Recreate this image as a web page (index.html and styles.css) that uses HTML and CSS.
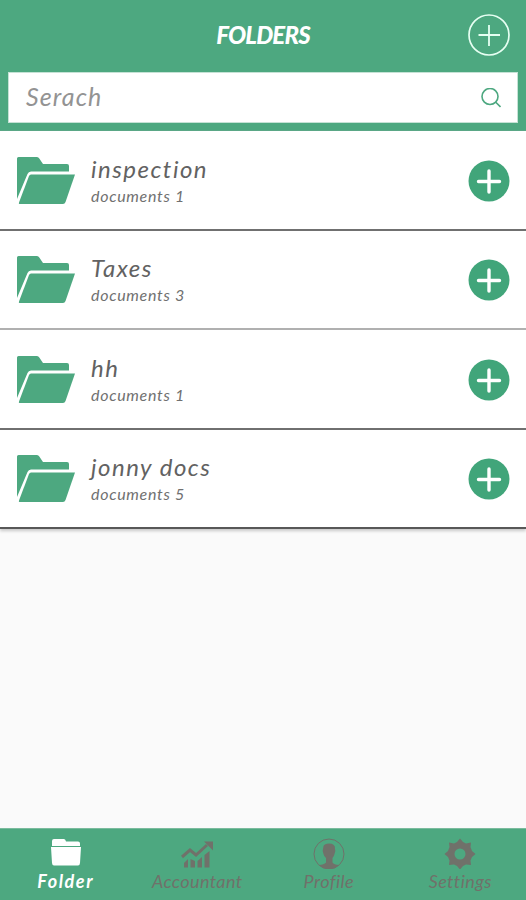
FILE: index.html
```html
<!DOCTYPE html>
<html lang="en">
<head>
  <meta charset="UTF-8" />
  <meta name="viewport" content="width=device-width, initial-scale=1.0"/>
  <title>Folders</title>
  <link rel="stylesheet" href="styles.css">
</head>
<body>

<!-- shared icons -->
<svg class="sprite">
  <symbol id="icon-folder" viewBox="0 0 60 50">
    <path d="M1 2.500Q1 1 2.500 1H21Q22.500 1 23.300 2.500L27 8H51Q53 8 53 10V15.500H15Q12.500 15.500 11.500 18L1 43Z"/>
    <path d="M15 18.500H59L49.500 46Q48.800 48 47 48H3.500Q2.500 48 3 46.500L13 20Q13.600 18.500 15 18.500Z"/>
  </symbol>
  <symbol id="icon-add" viewBox="0 0 42 42">
    <circle cx="21" cy="21" r="20.500"/>
    <path d="M21 11V32M10.500 21.500H31.500" fill="none" stroke="#fff" stroke-width="3.400" stroke-linecap="round"/>
  </symbol>
</svg>

<header>
  <div class="title-bar">
    <h1>FOLDERS</h1>
    <button class="new-btn" aria-label="New folder">
      <svg width="42" height="42" viewBox="0 0 42 42" fill="none" stroke="#e6fff2">
        <circle cx="21" cy="21" r="20" stroke-width="1.700"/>
        <path d="M21 11V32M10.500 21H32" stroke-width="1.800"/>
      </svg>
    </button>
  </div>
  <div class="search">
    <span>Serach</span>
    <svg width="20" height="20" viewBox="0 0 20 20" fill="none" stroke="#4da880" stroke-width="1.600">
      <circle cx="9" cy="8.500" r="8"/>
      <path d="M14.500 14L19.500 19"/>
    </svg>
  </div>
</header>

<main>
  <div class="row">
    <svg class="folder"><use href="#icon-folder"/></svg>
    <div class="info">
      <h2>inspection</h2>
      <p>documents 1</p>
    </div>
    <svg class="add"><use href="#icon-add"/></svg>
  </div>
  <div class="row light">
    <svg class="folder"><use href="#icon-folder"/></svg>
    <div class="info">
      <h2>Taxes</h2>
      <p>documents 3</p>
    </div>
    <svg class="add"><use href="#icon-add"/></svg>
  </div>
  <div class="row">
    <svg class="folder"><use href="#icon-folder"/></svg>
    <div class="info">
      <h2>hh</h2>
      <p>documents 1</p>
    </div>
    <svg class="add"><use href="#icon-add"/></svg>
  </div>
  <div class="row last">
    <svg class="folder"><use href="#icon-folder"/></svg>
    <div class="info">
      <h2>jonny docs</h2>
      <p>documents 5</p>
    </div>
    <svg class="add"><use href="#icon-add"/></svg>
  </div>
</main>

<nav>
  <a class="tab active">
    <svg width="32" height="32" viewBox="0 0 32 32">
      <path d="M2 8V4Q2 2 4 2H14Q15.500 2 16 4.500H28Q30 4.500 30 6.500V9H2Z"/>
      <path d="M1 10H31L30 26Q29.800 28.500 28 28.500H4Q2.200 28.500 2 26Z"/>
    </svg>
    <span>Folder</span>
  </a>
  <a class="tab">
    <svg width="32" height="32" viewBox="0 0 32 32">
      <path d="M1 20L9 13L15 18L26 8" fill="none" stroke="currentColor" stroke-width="3"/>
      <path d="M23 4.500H32V13.500Z"/>
      <path d="M3 26L7 22V30.500H3ZM9.500 22L14 24V30.500H9.500ZM16.500 24L21 20V30.500H16.500ZM23.500 18L28.500 14V30.500H23.500Z"/>
    </svg>
    <span>Accountant</span>
  </a>
  <a class="tab">
    <svg width="32" height="32" viewBox="0 0 32 32">
      <circle cx="16" cy="17" r="15" fill="none" stroke="currentColor" stroke-width="1"/>
      <path d="M10.500 9Q11.500 6.500 16 6.500Q22.500 6.500 22 12Q23 14 21.500 17Q21 19.500 19.500 21V25.500Q21 27.500 26 28Q22 32 16 32Q10 32 6 28Q11 27.500 13 25.500V21Q11 19.500 10.500 17Q9 14 10 12Z"/>
    </svg>
    <span>Profile</span>
  </a>
  <a class="tab">
    <svg width="32" height="32" viewBox="0 0 32 32">
      <path fill-rule="evenodd" d="M13 5L16 1.500L19 5L22 6.500L27 5.500L26.500 10L28 14L31.500 17L28 20L26.500 23.500L27 28L22 27.500L19 29L16 32.500L13 29L10 27.500L5 28L5.500 23.500L4 20L.5 17L4 14L5.500 10L5 5.500L10 6.500ZM16 11.500A5.500 5.500 0 1 0 16 22.500A5.500 5.500 0 1 0 16 11.500Z"/>
    </svg>
    <span>Settings</span>
  </a>
</nav>

</body>
</html>
```
FILE: styles.css
```css
* {
  box-sizing: border-box;
}
body {
  font-family: Lato, "Open Sans", sans-serif;
  font-style: italic;
  background: #fafafa;
  margin: 0;
  height: 900px;
  display: flex;
  flex-direction: column;
  overflow: hidden;
}
h1, h2, p {
  margin: 0;
  white-space: nowrap;
}
svg {
  display: block;
  fill: currentColor;
  flex-shrink: 0;
}
.sprite {
  display: none;
}
header {
  background: #4da880;
  height: 131px;
  padding: 0 8px;
  border-bottom: 1px solid #5aa786;
}
.title-bar {
  height: 72px;
  display: grid;
  grid-template-columns: 42px 1fr 42px;
  align-items: center;
  padding: 0 8px;
}
h1 {
  grid-column: 2;
  color: white;
  font-size: 24px;
  font-weight: 900;
  text-align: center;
  letter-spacing: -0.8px;
  padding-bottom: 3px;
}
.new-btn {
  background: none;
  border: none;
  padding: 0;
  margin-top: -2px;
}
.new-btn svg {
  fill: none;
}
.search {
  background: white;
  border: 1px solid #c5e2d5;
  height: 51px;
  display: flex;
  align-items: center;
  justify-content: space-between;
  padding: 0 16px 0 17px;
}
.search span {
  color: #939393;
  font-size: 25px;
  letter-spacing: 1.1px;
  padding-bottom: 3px;
}
.search svg {
  fill: none;
}
.row {
  background: white;
  height: 99.5px;
  display: flex;
  align-items: center;
  padding: 2px 16px 0;
  border-bottom: 2px solid #707070;
}
.row.light {
  border-bottom-color: #b0b0b0;
}
.row.last {
  border-bottom-color: #585858;
  box-shadow: 0 2px 3px rgba(0,0,0,0.2);
}
.folder {
  width: 60px;
  height: 50px;
  color: #4da880;
}
.info {
  flex: 1;
  margin-left: 15px;
}
h2 {
  color: #626262;
  font-size: 24px;
  font-weight: normal;
  line-height: 30px;
  letter-spacing: 1.5px;
}
.info p {
  color: #707070;
  font-size: 16px;
  line-height: 24px;
  letter-spacing: 0.7px;
}
.add {
  width: 42px;
  height: 42px;
  color: #41a57a;
}
nav {
  background: #4da880;
  height: 72px;
  margin-top: auto;
  border-top: 1px solid #7abb9d;
  display: flex;
}
.tab {
  flex: 1;
  display: flex;
  flex-direction: column;
  align-items: center;
  padding-top: 8px;
  color: #70716a;
  font-size: 18px;
}
.tab span {
  line-height: 24px;
  letter-spacing: 0.4px;
}
.tab.active {
  color: white;
}
.tab.active span {
  font-weight: bold;
  letter-spacing: 1.6px;
}
```
